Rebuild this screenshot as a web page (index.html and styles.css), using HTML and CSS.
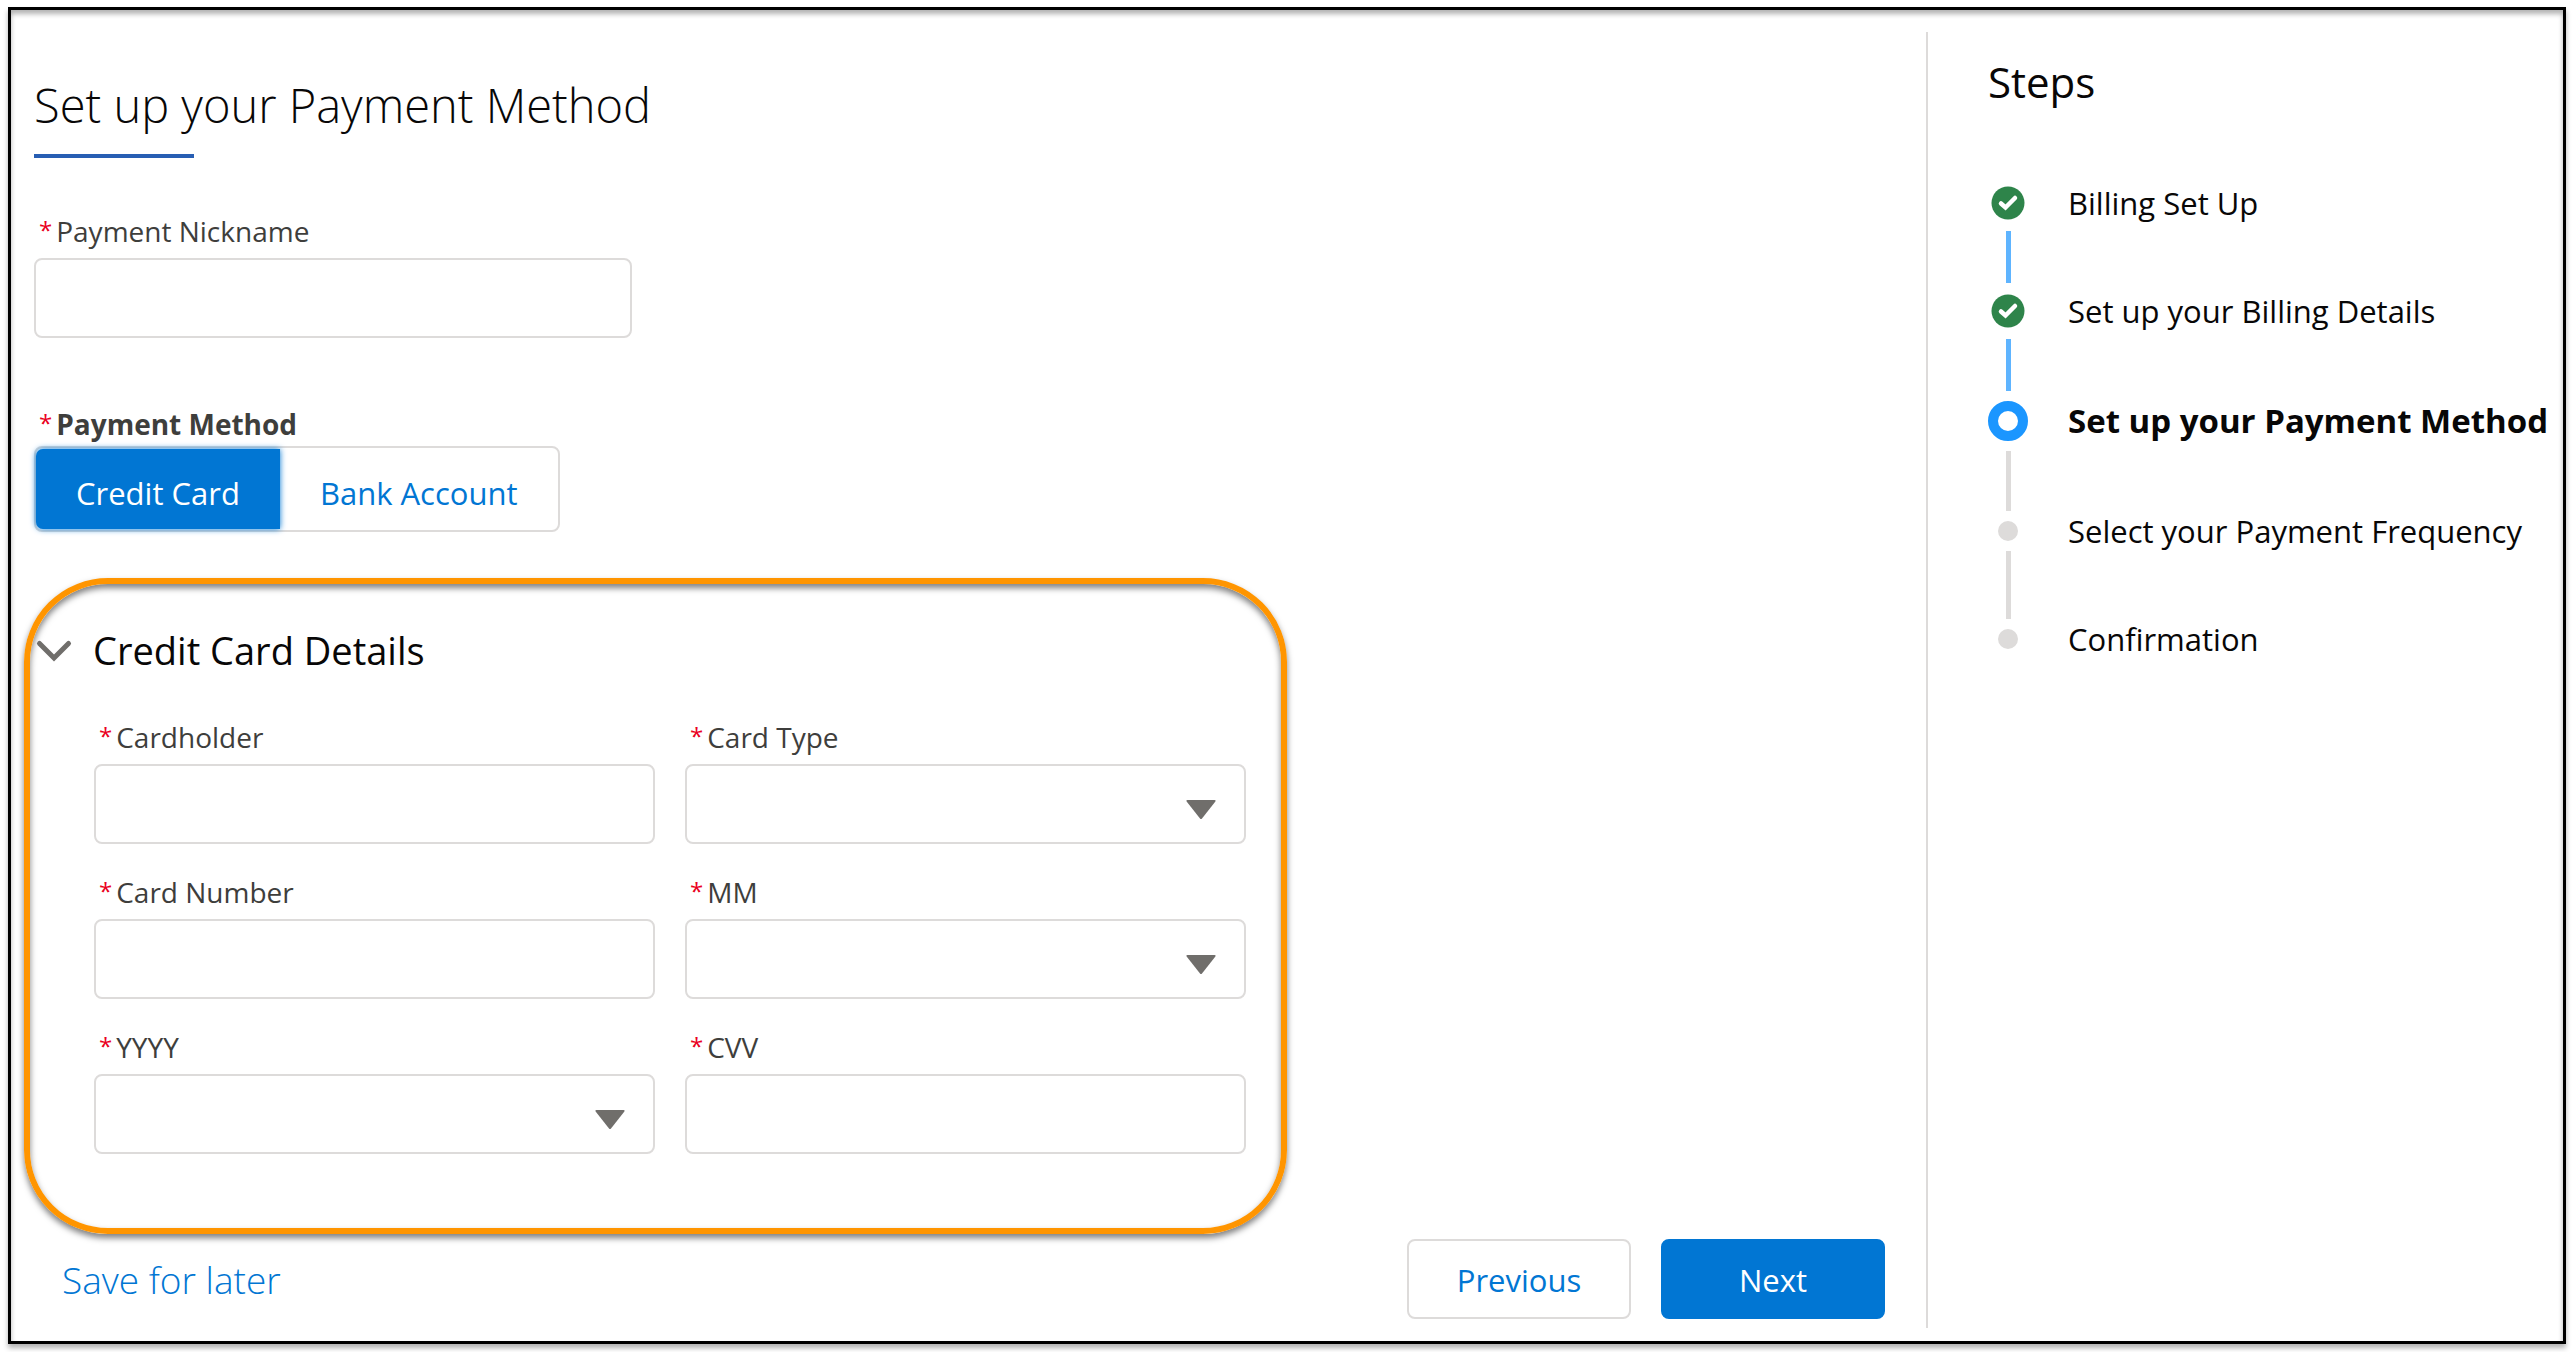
FILE: index.html
```html
<!DOCTYPE html>
<html lang="en">
<head>
<meta charset="utf-8">
<meta name="viewport" content="width=device-width, initial-scale=1">
<title>Set up your Payment Method</title>
<link rel="stylesheet" href="styles.css">
</head>
<body>
<div class="frame">
  <main class="main">
    <form class="form">
      <h1 class="title">Set up your Payment Method</h1>

      <div class="field field-nickname">
        <label class="label" for="nickname"><span class="req">*</span>Payment Nickname</label>
        <input class="input" id="nickname" type="text" required>
      </div>

      <fieldset class="method">
        <legend class="label label-strong"><span class="req">*</span>Payment Method</legend>
        <div class="group">
          <label class="option"><input class="option-input" type="radio" name="method" checked><span class="option-face">Credit Card</span></label>
          <label class="option"><input class="option-input" type="radio" name="method"><span class="option-face">Bank Account</span></label>
        </div>
      </fieldset>

      <section class="panel">
        <h2 class="panel-head">
          <button class="toggle" type="button" aria-expanded="true">
            <svg class="chevron" viewBox="0 0 34 20" aria-hidden="true"><path d="M2.500 3.500L17 18L31.500 3.500" fill="none" stroke="#706e6b" stroke-width="5" stroke-linecap="round"/></svg>
            <span>Credit Card Details</span>
          </button>
        </h2>
        <div class="fields">
          <div class="field">
            <label class="label" for="holder"><span class="req">*</span>Cardholder</label>
            <input class="input" id="holder" type="text" required>
          </div>
          <div class="field">
            <label class="label" for="type"><span class="req">*</span>Card Type</label>
            <div class="select-wrap"><select class="input" id="type" required><option value=""></option></select><svg class="caret" viewBox="0 0 30 20" aria-hidden="true"><path d="M1.500 0H28.500Q30.500 0 29 2L16 18.500Q15 19.500 14 18.500L1 2Q-.5 0 1.500 0Z" fill="#706e6b"/></svg></div>
          </div>
          <div class="field">
            <label class="label" for="number"><span class="req">*</span>Card Number</label>
            <input class="input" id="number" type="text" required>
          </div>
          <div class="field">
            <label class="label" for="month"><span class="req">*</span>MM</label>
            <div class="select-wrap"><select class="input" id="month" required><option value=""></option></select><svg class="caret" viewBox="0 0 30 20" aria-hidden="true"><path d="M1.500 0H28.500Q30.500 0 29 2L16 18.500Q15 19.500 14 18.500L1 2Q-.5 0 1.500 0Z" fill="#706e6b"/></svg></div>
          </div>
          <div class="field">
            <label class="label" for="year"><span class="req">*</span>YYYY</label>
            <div class="select-wrap"><select class="input" id="year" required><option value=""></option></select><svg class="caret" viewBox="0 0 30 20" aria-hidden="true"><path d="M1.500 0H28.500Q30.500 0 29 2L16 18.500Q15 19.500 14 18.500L1 2Q-.5 0 1.500 0Z" fill="#706e6b"/></svg></div>
          </div>
          <div class="field">
            <label class="label" for="cvv"><span class="req">*</span>CVV</label>
            <input class="input" id="cvv" type="text" required>
          </div>
        </div>
      </section>

      <div class="actions">
        <a class="save" href="#">Save for later</a>
        <button class="btn" type="button">Previous</button>
        <button class="btn btn-primary" type="submit">Next</button>
      </div>
    </form>
  </main>

  <aside class="steps">
    <h2 class="steps-title">Steps</h2>
    <ol class="step-list">
      <li class="step step-done">
        <svg class="marker" viewBox="0 0 36 36" aria-hidden="true"><circle cx="18" cy="18" r="16.500" fill="#2e844a"/><path d="M11 18.500L15.500 22.500L25 13" fill="none" stroke="#fff" stroke-width="4.500" stroke-linecap="round"/></svg>
        <span class="step-name">Billing Set Up</span>
      </li>
      <li class="step step-done">
        <svg class="marker" viewBox="0 0 36 36" aria-hidden="true"><circle cx="18" cy="18" r="16.500" fill="#2e844a"/><path d="M11 18.500L15.500 22.500L25 13" fill="none" stroke="#fff" stroke-width="4.500" stroke-linecap="round"/></svg>
        <span class="step-name">Set up your Billing Details</span>
      </li>
      <li class="step step-current" aria-current="step">
        <span class="marker"></span>
        <span class="step-name">Set up your Payment Method</span>
      </li>
      <li class="step step-next">
        <span class="marker"></span>
        <span class="step-name">Select your Payment Frequency</span>
      </li>
      <li class="step step-last">
        <span class="marker"></span>
        <span class="step-name">Confirmation</span>
      </li>
    </ol>
  </aside>
</div>
</body>
</html>
```
FILE: styles.css
```css
*, *::before, *::after { box-sizing: border-box; }

body {
  margin: 0;
  padding: 7px 8px 8px;
  background: #fff;
  color: #080707;
  font-family: "Open Sans", "Noto Sans", sans-serif;
  font-size: 31px;
}

h1, h2 { margin: 0; font-weight: 400; }

button, input, select { font: inherit; color: inherit; }

.frame {
  display: flex;
  min-height: calc(100vh - 15px);
  padding: 22px 0 13px;
  border: 3px solid #000;
  box-shadow: 0 4px 5px rgba(0, 0, 0, .3), inset 0 4px 5px rgba(0, 0, 0, .3);
}

.main {
  flex: 1;
  min-width: 0;
  padding: 40px 41px 8px 23px;
}

.title {
  position: relative;
  padding-bottom: 20px;
  font-size: 47px;
  font-weight: 300;
  line-height: 66px;
}

.title::after {
  content: "";
  display: block;
  position: absolute;
  bottom: 0;
  left: 0;
  width: 160px;
  height: 4px;
  background: #275eb3;
}

.field { display: flex; flex-direction: column; }

.field-nickname { width: 598px; max-width: 100%; margin-top: 50px; }

.label {
  display: block;
  padding: 1px 0 5px 5px;
  color: #3e3e3c;
  font-size: 28px;
  line-height: 44px;
}

.label-strong { font-weight: 700; }

.req {
  margin-right: 4px;
  color: #ea001e;
  font-size: 24px;
  font-weight: 400;
  line-height: 24px;
  vertical-align: 3px;
}

.input {
  display: block;
  width: 100%;
  height: 80px;
  padding: 0 24px;
  border: 2px solid #dddbda;
  border-radius: 8px;
  background: #fff;
  appearance: none;
}

.select-wrap { position: relative; }

.caret {
  position: absolute;
  top: 36px;
  right: 30px;
  width: 30px;
  height: 20px;
  pointer-events: none;
}

.method { margin: 62px 0 0; padding: 0; border: 0; }

.method .label { padding-top: 2px; padding-bottom: 0; }

.group {
  display: inline-flex;
  height: 86px;
  border: 2px solid #dddbda;
  border-radius: 8px;
  vertical-align: top;
}

.option { display: flex; }

.option-input {
  position: absolute;
  opacity: 0;
}

.option-face {
  display: flex;
  align-items: center;
  padding: 8px 40px 0;
  margin: 1px 0;
  border-radius: 7px 0 0 7px;
  color: #0176d3;
}

.option-input:checked + .option-face {
  background: #0176d3;
  color: #fff;
  box-shadow: 0 0 6px #0176d3;
}

.panel {
  width: 1263px;
  max-width: 100%;
  margin: 46px 0 0 -10px;
  padding: 38px 35px 74px 7px;
  border: 6px solid #ff9500;
  border-radius: 84px;
  box-shadow: 0 4px 6px rgba(0, 0, 0, .5), inset 0 4px 6px rgba(0, 0, 0, .5);
}

.toggle {
  display: flex;
  align-items: center;
  gap: 22px;
  padding: 0;
  border: 0;
  background: none;
  font-size: 38px;
  line-height: 56px;
}

.chevron { width: 34px; height: 20px; overflow: visible; }

.fields {
  display: grid;
  grid-template-columns: 1fr 1fr;
  gap: 25px 30px;
  margin-top: 36px;
  padding-left: 57px;
}

.actions {
  display: flex;
  align-items: center;
  gap: 30px;
  margin-top: 5px;
  padding-left: 28px;
}

.save {
  margin-right: auto;
  color: #0176d3;
  font-size: 37px;
  font-weight: 300;
  text-decoration: none;
}

.btn {
  width: 224px;
  height: 80px;
  padding: 2px 0 0;
  border: 2px solid #dddbda;
  border-radius: 8px;
  background: #fff;
  color: #0176d3;
}

.btn-primary { border-color: #0176d3; background: #0176d3; color: #fff; }

.steps {
  flex: none;
  width: 637px;
  padding: 20px 0 0 60px;
  border-left: 2px solid #dddbda;
}

.steps-title { font-size: 42px; line-height: 60px; }

.step-list {
  display: flex;
  flex-direction: column;
  gap: 10px;
  margin: 73px 0 0;
  padding: 0;
  list-style: none;
}

.step {
  display: grid;
  grid-template-columns: 40px auto;
  align-items: center;
  justify-content: start;
  justify-items: start;
  gap: 10px 40px;
}

.marker { display: block; justify-self: center; width: 20px; height: 20px; border-radius: 50%; background: #dddbda; }

.step-done .marker { width: 36px; height: 36px; background: none; }

.step-current .marker { width: 40px; height: 40px; border: 10px solid #1b96ff; background: #fff; }

.step-name { line-height: 20px; white-space: nowrap; }

.step::after {
  content: "";
  justify-self: center;
  width: 5px;
  height: 60px;
  background: #dddbda;
}

.step-done::after { height: 52px; background: #5eb4ff; }

.step-next::after { height: 68px; }

.step-last::after { display: none; }

.step-current .step-name { font-size: 33px; font-weight: 700; }
```
